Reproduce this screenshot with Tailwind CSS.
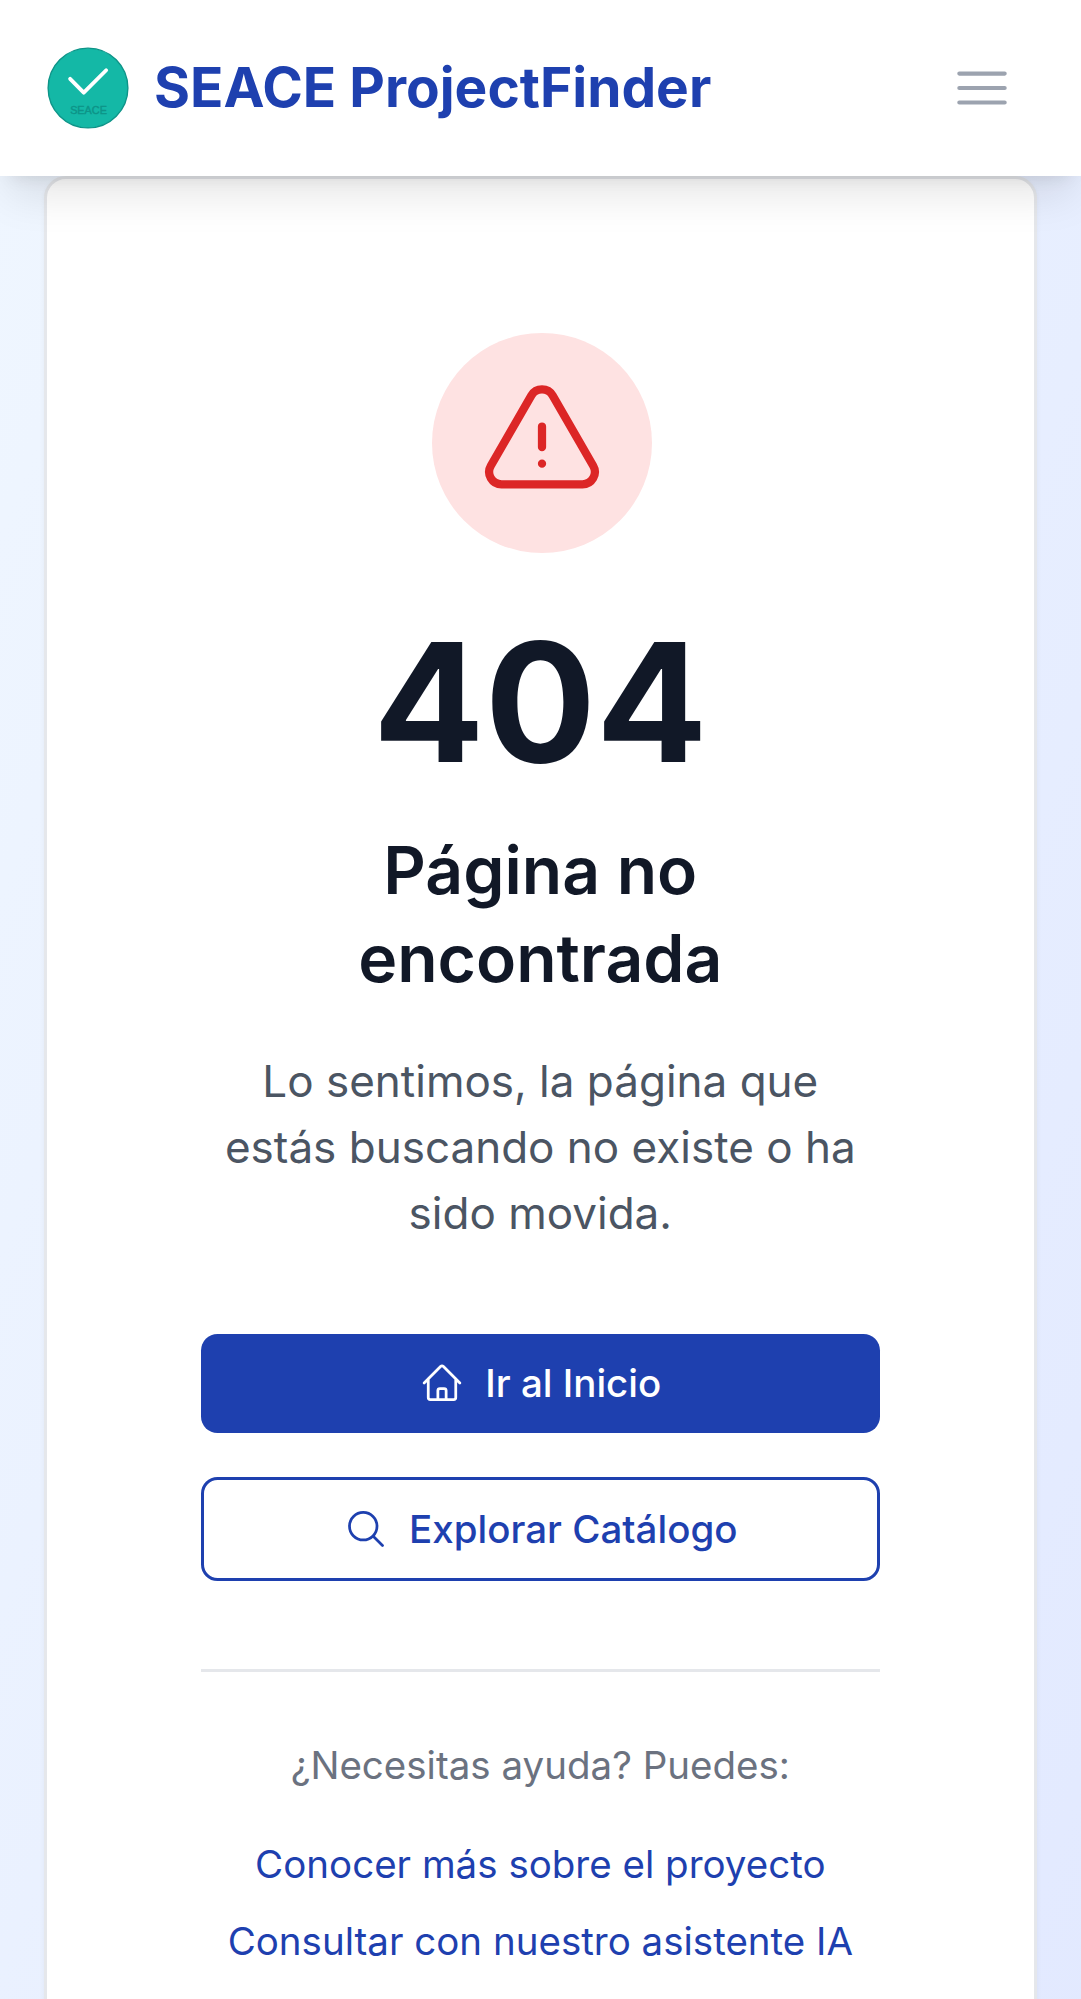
<!DOCTYPE html>
<html lang="es">
<head>
<meta charset="utf-8">
<title>SEACE ProjectFinder</title>
<script src="https://cdn.jsdelivr.net/npm/@tailwindcss/browser@4"></script>
</head>
<body class="h-[1999px] overflow-hidden bg-white font-['Inter',sans-serif]">
<div class="flex h-[1999px] flex-col overflow-hidden">
  <header class="relative z-10 flex h-[176px] shrink-0 items-center justify-between bg-white pl-[44px] pr-[66px] shadow-[0_27.5px_41.25px_-8.25px_rgb(0_0_0/0.1),0_11px_16.5px_-11px_rgb(0_0_0/0.1)]">
    <a class="flex items-center gap-[22px]" href="#">
      <svg class="size-[88px]" viewBox="0 0 64 64" fill="none">
        <circle cx="32" cy="32" r="29" fill="#14b8a6" stroke="#0d9488"/>
        <path d="M19 25.3 28.9 35.4 45.2 19.1" stroke="#fff" stroke-width="2.8" stroke-linecap="round" stroke-linejoin="round"/>
        <text x="32.4" y="51" text-anchor="middle" font-family="Liberation Sans, sans-serif" font-size="7.9" fill="#0d9488" stroke="#0d9488" stroke-width=".3">SEACE</text>
      </svg>
      <span class="mb-[2px] text-[55px] leading-[77px] font-bold whitespace-nowrap text-[#1e40af]">SEACE ProjectFinder</span>
    </a>
    <button class="text-[#9ca3af]" aria-label="Menú">
      <svg class="size-[66px]" viewBox="0 0 24 24" fill="none" stroke="currentColor" stroke-width="1.5" stroke-linecap="round" stroke-linejoin="round"><path d="M3.75 6.75h16.5M3.75 12h16.5m-16.5 5.25h16.5"/></svg>
    </button>
  </header>
  <main class="h-[2700px] shrink-0 bg-linear-to-br from-[#eff6ff] to-[#e0e7ff] px-[44px]">
    <section class="flex h-full flex-col rounded-[22px] border-[3px] border-[#e5e7eb] bg-white pl-[153.6px] pr-[154px] pt-[154px] text-center shadow-[0_2.75px_5.5px_rgb(0_0_0/0.05)]">
      <div class="ml-[231px] flex size-[220px] shrink-0 items-center justify-center rounded-full bg-[#fee2e2] text-[#dc2626]">
        <svg class="size-[132px]" viewBox="0 0 24 24" fill="none" stroke="currentColor" stroke-width="1.5" stroke-linecap="round" stroke-linejoin="round"><path d="M12 9v3.75m-9.303 3.376c-.866 1.5.217 3.374 1.948 3.374h14.71c1.73 0 2.813-1.874 1.948-3.374L13.949 3.378c-.866-1.5-3.032-1.5-3.898 0L2.697 16.126ZM12 15.75h.007v.008H12v-.008Z"/></svg>
      </div>
      <h1 class="mt-[67px] text-[165px] leading-[165px] font-bold text-[#111827]">404</h1>
      <h2 class="mt-[41px] text-[66px] leading-[88px] font-semibold text-[#111827]">Página no<br>encontrada</h2>
      <p class="mt-[46px] text-[44px] leading-[66px] text-[#4b5563]">Lo sentimos, la página que<br>estás buscando no existe o ha<br>sido movida.</p>
      <a class="mt-[87.9px] flex h-[99px] shrink-0 items-center justify-center gap-[21px] rounded-[16.5px] bg-[#1e40af] pl-px text-[38.5px] leading-[55px] font-medium text-white" href="#">
        <svg class="size-[44px]" viewBox="0 0 24 24" fill="none" stroke="currentColor" stroke-width="1.5" stroke-linecap="round" stroke-linejoin="round"><path d="m2.25 12 8.954-8.955c.44-.439 1.152-.439 1.591 0L21.75 12M4.5 9.75v10.125c0 .621.504 1.125 1.125 1.125H9.75v-4.875c0-.621.504-1.125 1.125-1.125h2.25c.621 0 1.125.504 1.125 1.125V21h4.125c.621 0 1.125-.504 1.125-1.125V9.75M8.25 21h8.25"/></svg>
        <span>Ir al Inicio</span>
      </a>
      <a class="mt-[44px] flex h-[104.5px] shrink-0 items-center justify-center gap-[21px] rounded-[16.5px] border-[3px] border-[#1e40af] bg-white pl-px text-[38.5px] leading-[55px] font-medium text-[#1e40af]" href="#">
        <svg class="size-[44px]" viewBox="0 0 24 24" fill="none" stroke="currentColor" stroke-width="1.5" stroke-linecap="round" stroke-linejoin="round"><path d="m21 21-5.197-5.197m0 0A7.5 7.5 0 1 0 5.196 5.196a7.5 7.5 0 0 0 10.607 10.607Z"/></svg>
        <span>Explorar Catálogo</span>
      </a>
      <div class="mt-[87.5px] border-t-[3px] border-[#e5e7eb] pt-[66px] text-[38.5px] leading-[55px]">
        <p class="text-[#6b7280]">¿Necesitas ayuda? Puedes:</p>
        <div class="mt-[44px] flex flex-col gap-[22px] text-[#1e40af]">
          <a href="#">Conocer más sobre el proyecto</a>
          <a href="#">Consultar con nuestro asistente IA</a>
        </div>
      </div>
    </section>
  </main>
</div>
</body>
</html>
